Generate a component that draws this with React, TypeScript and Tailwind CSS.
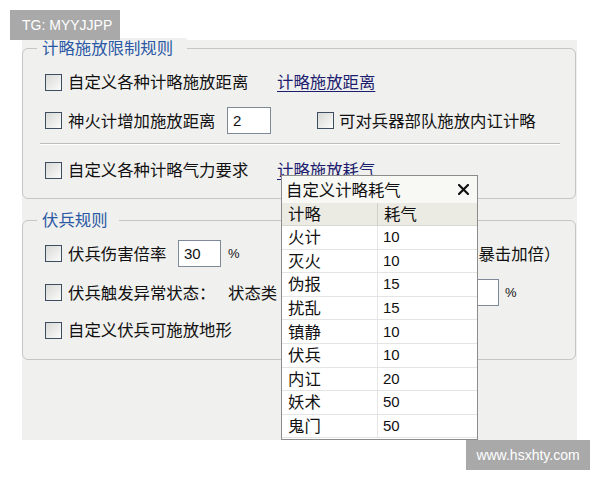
import React from "react";

const FONT = "font-['Liberation_Sans','Noto_Sans_CJK_SC',sans-serif]";

function Check() {
  return (
    <span className="inline-block w-[17px] h-[17px] shrink-0 border border-[#3f4d60] bg-gradient-to-br from-[#d9d9d6] to-[#fbfbfa]" />
  );
}

function Input({ value, w }: { value: string; w: string }) {
  return (
    <span
      className={`inline-flex items-center h-[27px] ${w} border border-[#7f8a99] bg-white pl-[5px] text-[15px] text-[#111] shrink-0`}
    >
      {value}
    </span>
  );
}

const rows: [string, string][] = [
  ["火计", "10"],
  ["灭火", "10"],
  ["伪报", "15"],
  ["扰乱", "15"],
  ["镇静", "10"],
  ["伏兵", "10"],
  ["内讧", "20"],
  ["妖术", "50"],
  ["鬼门", "50"],
];

export default function App() {
  return (
    <div className={`relative w-[600px] h-[480px] bg-white overflow-hidden ${FONT} text-[16.4px] text-[#111]`}>
      <div className="pt-[40px] pl-[22px]">
        <div className="w-[555px] h-[400px] bg-[#f0f0ee] pt-[8px]">
          {/* Group 1 */}
          <div className="relative w-[554px] h-[151px] border border-[#c6c6c4] rounded-[6px] pt-[21px] pl-[22px] flex flex-col">
            <span className="absolute -top-[11px] left-[14px] bg-[#f0f0ee] pl-[5px] pr-[14px] leading-[20px] text-[#2a58a4]">
              计略施放限制规则
            </span>
            <div className="flex items-center h-[24px] leading-[20px]">
              <div className="flex items-center w-[232px] gap-[6px]">
                <Check />
                <span>自定义各种计略施放距离</span>
              </div>
              <span className="text-[#1d1d6e] underline underline-offset-[3px]">计略施放距离</span>
            </div>
            <div className="flex items-center h-[27px] mt-[13px] leading-[20px]">
              <div className="flex items-center w-[182px] gap-[6px]">
                <Check />
                <span>神火计增加施放距离</span>
              </div>
              <Input value="2" w="w-[44px]" />
              <div className="flex items-center gap-[5px] ml-[46px]">
                <Check />
                <span>可对兵器部队施放内讧计略</span>
              </div>
            </div>
            <div className="mt-[9px] -ml-[5px] w-[520px] h-[2px] border-t border-[#bdbdbb] border-b border-b-white" />
            <div className="flex items-center h-[24px] mt-[13px] leading-[20px]">
              <div className="flex items-center w-[232px] gap-[6px]">
                <Check />
                <span>自定义各种计略气力要求</span>
              </div>
              <span className="text-[#1d1d6e] underline underline-offset-[3px]">计略施放耗气</span>
            </div>
          </div>

          {/* Group 2 */}
          <div className="relative mt-[21px] w-[554px] h-[140px] border border-[#c6c6c4] rounded-[6px] pt-[19px] pl-[22px] flex flex-col">
            <span className="absolute -top-[11px] left-[14px] bg-[#f0f0ee] pl-[5px] pr-[11px] leading-[20px] text-[#2a58a4]">
              伏兵规则
            </span>
            <div className="flex items-center h-[27px] leading-[20px]">
              <div className="flex items-center w-[133px] gap-[6px]">
                <Check />
                <span>伏兵伤害倍率</span>
              </div>
              <Input value="30" w="w-[43px]" />
              <span className="w-[20px] ml-[7px] text-[13px]">%</span>
              <span className="ml-[214px]">（暴击加倍）</span>
            </div>
            <div className="flex items-center h-[27px] mt-[12px] leading-[20px]">
              <div className="flex items-center w-[183px] gap-[6px]">
                <Check />
                <span>伏兵触发异常状态：</span>
              </div>
              <span className="w-[228px] shrink-0">状态类</span>
              <Input value="" w="w-[43px]" />
              <span className="ml-[6px] text-[13px]">%</span>
            </div>
            <div className="flex items-center h-[24px] mt-[12px] leading-[20px]">
              <div className="flex items-center w-[232px] gap-[6px]">
                <Check />
                <span>自定义伏兵可施放地形</span>
              </div>
            </div>
          </div>
        </div>
      </div>

      {/* Popup */}
      <div className="absolute left-[281px] top-[175px] w-[197px] h-[265px] border border-[#8c8c8c] bg-white flex flex-col">
        <div className="flex items-center justify-between h-[27px] bg-[#f8f8f4] pl-[4px] pr-[8px] leading-[20px]">
          <span>自定义计略耗气</span>
          <svg width="11" height="11" viewBox="0 0 11 11">
            <path d="M1 1 L10 10 M10 1 L1 10" stroke="#111" strokeWidth="2.2" strokeLinecap="square" />
          </svg>
        </div>
        <div className="flex h-[23px] bg-[#ebeae3] border-b border-[#d8d7cf] leading-[20px]">
          <div className="w-[96px] flex items-center pl-[6px] border-r border-[#d2d1c9]">计略</div>
          <div className="flex items-center pl-[6px]">耗气</div>
        </div>
        {rows.map(([name, val]) => (
          <div key={name} className="flex h-[23.6px] border-b border-[#e4e4e4] leading-[20px]">
            <div className="w-[96px] flex items-center pl-[6px] border-r border-[#e6e6e6]">{name}</div>
            <div className="flex items-center pl-[5px] text-[15px]">{val}</div>
          </div>
        ))}
      </div>

      {/* Watermarks */}
      <div className="absolute left-[10px] top-[10px] w-[110px] h-[30px] bg-[#a9a9a9] flex items-center pl-[12px] text-white text-[14px] font-['Liberation_Sans',sans-serif]">
        TG: MYYJJPP
      </div>
      <div className="absolute left-[466px] top-[440px] w-[124px] h-[30px] bg-[#a9a9a9] flex items-center justify-center text-white text-[14px] font-['Liberation_Sans',sans-serif]">
        www.hsxhty.com
      </div>
    </div>
  );
}
